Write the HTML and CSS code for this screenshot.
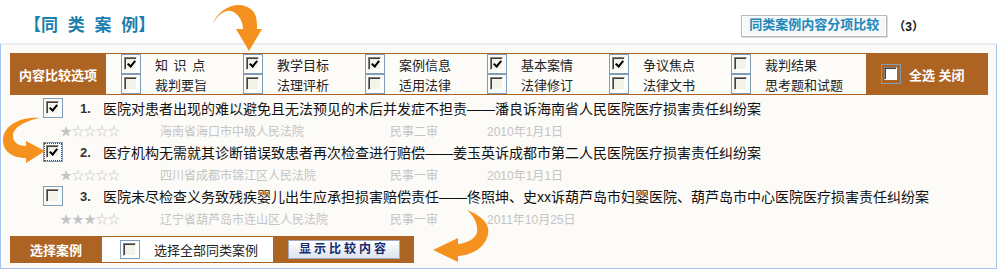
FILE: index.html
```html
<!DOCTYPE html>
<html lang="zh-CN">
<head>
  <meta charset="UTF-8" />
  <title>同类案例</title>
  <link rel="stylesheet" href="styles.css">
</head>
<body>
  <div class="top">
    <h2 class="title">【同 类 案 例】</h2>
    <div class="top-right">
      <span class="btn-top">同类案例内容分项比较</span>
      <span class="count">（3）</span>
    </div>
  </div>

  <div class="panel">
    <div class="opts">
      <div class="opts-label">内容比较选项</div>
      <div class="opts-grid">
        <label class="opt"><span class="cb"><span class="chk on"></span></span><span class="opt-text sp">知 识 点</span></label>
        <label class="opt"><span class="cb"><span class="chk on"></span></span><span class="opt-text">教学目标</span></label>
        <label class="opt"><span class="cb"><span class="chk on"></span></span><span class="opt-text">案例信息</span></label>
        <label class="opt"><span class="cb"><span class="chk on"></span></span><span class="opt-text">基本案情</span></label>
        <label class="opt"><span class="cb"><span class="chk on"></span></span><span class="opt-text">争议焦点</span></label>
        <label class="opt"><span class="cb"><span class="chk"></span></span><span class="opt-text">裁判结果</span></label>
        <label class="opt"><span class="cb"><span class="chk"></span></span><span class="opt-text">裁判要旨</span></label>
        <label class="opt"><span class="cb"><span class="chk"></span></span><span class="opt-text">法理评析</span></label>
        <label class="opt"><span class="cb"><span class="chk"></span></span><span class="opt-text">适用法律</span></label>
        <label class="opt"><span class="cb"><span class="chk"></span></span><span class="opt-text">法律修订</span></label>
        <label class="opt"><span class="cb"><span class="chk"></span></span><span class="opt-text">法律文书</span></label>
        <label class="opt"><span class="cb"><span class="chk"></span></span><span class="opt-text">思考题和试题</span></label>
      </div>
      <div class="opts-all"><span class="cb"><span class="chk white"></span></span><span class="all-text">全选&nbsp;关闭</span></div>
    </div>

    <ul class="cases">
      <li class="case">
        <div class="case-title"><span class="cb"><span class="chk on"></span></span><b class="num">1.</b><span>医院对患者出现的难以避免且无法预见的术后并发症不担责——潘良诉海南省人民医院医疗损害责任纠纷案</span></div>
        <div class="case-meta"><span class="stars">★☆☆☆☆</span><span class="court">海南省海口市中级人民法院</span><span class="trial">民事二审</span><span>2010年1月1日</span></div>
      </li>
      <li class="case">
        <div class="case-title"><span class="cb focus"><span class="chk on"></span></span><b class="num">2.</b><span>医疗机构无需就其诊断错误致患者再次检查进行赔偿——姜玉英诉成都市第二人民医院医疗损害责任纠纷案</span></div>
        <div class="case-meta"><span class="stars">★☆☆☆☆</span><span class="court">四川省成都市锦江区人民法院</span><span class="trial">民事一审</span><span>2010年1月1日</span></div>
      </li>
      <li class="case">
        <div class="case-title"><span class="cb"><span class="chk"></span></span><b class="num">3.</b><span>医院未尽检查义务致残疾婴儿出生应承担损害赔偿责任——佟照坤、史xx诉葫芦岛市妇婴医院、葫芦岛市中心医院医疗损害责任纠纷案</span></div>
        <div class="case-meta"><span class="stars">★★★☆☆</span><span class="court">辽宁省葫芦岛市连山区人民法院</span><span class="trial">民事一审</span><span>2011年10月25日</span></div>
      </li>
    </ul>

    <div class="pick">
      <div class="pick-label">选择案例</div>
      <div class="pick-all"><span class="cb"><span class="chk"></span></span><span class="opt-text">选择全部同类案例</span></div>
      <div class="pick-btn"><span class="btn-show">显示比较内容</span></div>
    </div>
  </div>

  <!-- orange hint arrows -->
  <svg class="arrow arrow-top" width="70" height="55" viewBox="0 0 70 55">
    <path d="M13 24 C18 8, 40 -2, 53 11 C57 16, 57 22, 57 29 L62 29 L49 51 L36 29 L43 29 C43 21, 38 13, 31 11 C24 10, 18 15, 13 24 Z" />
  </svg>
  <svg class="arrow arrow-left" width="50" height="60" viewBox="0 0 50 60">
    <path d="M40 8 C20 6, 3 16, 3 30 C3 42, 13 48, 26 48 L26 53 L45 41 L26 31 L26 36 C18 36, 13 32, 13 26 C13 18, 24 11, 40 8 Z" />
  </svg>
  <svg class="arrow arrow-bottom" width="75" height="65" viewBox="0 0 75 65">
    <path d="M47 10 C62 16, 70 24, 68 34 C66 46, 54 55, 38 56 L38 62 L13 50 L38 38 L38 44 C48 43, 56 38, 57 32 C58 24, 54 16, 47 10 Z" />
  </svg>
</body>
</html>
```

FILE: styles.css
```css
/* base */
* { box-sizing: border-box; margin: 0; padding: 0; }
body {
  font-family: "Liberation Sans", "Noto Sans CJK SC", sans-serif;
  font-size: 13px;
  color: #222;
  background: #fff;
  position: relative;
  width: 998px;
}

/* title row */
.top {
  display: flex;
  align-items: center;
  height: 43px;
  padding-top: 8px;
  padding-left: 24px;
}
.title {
  font-size: 17px;
  font-weight: bold;
  color: #1b7fad;
  word-spacing: 5px;
  line-height: 20px;
}
.top-right { margin-left: auto; display: flex; align-items: center; padding-right: 74px; }
.btn-top {
  display: inline-block;
  height: 22px;
  line-height: 18px;
  padding: 0 7px;
  border: 1px solid #b9b9b9;
  box-shadow: inset 0 0 0 1px #fff, 1px 1px 0 #ddd;
  background: #f5f7f8;
  color: #1d88ba;
  font-weight: bold;
  font-size: 13px;
}
.count { margin-left: 6px; font-weight: bold; font-size: 12px; color: #111; }

/* main panel */
.panel {
  width: 997px;
  background: #fcfbf8;
  border: 1px solid #a7c3ef;
  border-top: 2px solid #e8edf1;
  padding: 8px 0 5px;
}

/* checkbox look */
.cb {
  display: inline-flex;
  flex: none;
  width: 20px;
  height: 20px;
  padding: 2px 0 0 2px;
  border: 1px solid #7f9db9;
}
.cb.focus { outline: 1px dotted #444; outline-offset: -2px; }
.chk {
  display: inline-flex;
  align-items: center;
  justify-content: center;
  width: 13px;
  height: 13px;
  border: 1px solid;
  border-color: #808080 #fff #fff #808080;
  box-shadow: inset 1px 1px 0 #404040;
  background: #f3f3ea;
}
.chk.white { background: #fff; }
.chk.on::after {
  content: "";
  width: 3px;
  height: 6px;
  margin: -2px 0 0 1px;
  border: solid #000;
  border-width: 0 2px 2px 0;
  transform: rotate(40deg);
}

/* compare option bar */
.opts {
  display: flex;
  width: 978px;
  height: 42px;
  margin-left: 9px;
  padding: 1px 0;
  background: #ad6423;
}
.opts-label {
  width: 96px;
  display: flex; align-items: center; justify-content: center;
  color: #fff; font-weight: bold; font-size: 13px;
}
.opts-grid {
  width: 760px;
  background: #fdfcf9;
  padding-left: 15px;
  display: grid;
  grid-template-columns: repeat(6, 122px);
  grid-auto-rows: 20px;
}
.opt { display: flex; align-items: center; }
.opt-text { margin-left: 14px; font-size: 13px; color: #222; }
.sp { word-spacing: 2px; }
.opts-all {
  flex: 1;
  display: flex; align-items: center;
  padding-left: 15px;
  color: #fff; font-weight: bold; font-size: 13px;
}
.all-text { margin-left: 8px; }

/* case list */
.cases { list-style: none; margin-top: 2px; }
.case-title {
  display: flex; align-items: center;
  height: 22px;
  padding-left: 42px;
  font-size: 14px;
  color: #111;
}
.num { width: 23px; margin-left: 17px; font-size: 13px; color: #333; }
.case-meta {
  display: flex; align-items: center;
  height: 22px;
  padding-left: 59px;
  font-size: 12px;
  color: #c4c4c4;
}
.stars { width: 100px; font-family: "Noto Sans CJK SC", sans-serif; }
.court { width: 230px; }
.trial { width: 97px; }

/* select bar */
.pick {
  display: flex;
  width: 404px;
  height: 27px;
  margin: 7px 0 0 9px;
  padding: 1px 0;
  background: #ad6423;
}
.pick-label {
  width: 92px;
  display: flex; align-items: center; justify-content: center;
  color: #fff; font-weight: bold; font-size: 13px;
}
.pick-all {
  width: 171px;
  background: #fff;
  display: flex; align-items: center;
  padding-left: 18px;
}
.pick-all .cb { height: 19px; }
.pick-btn { display: flex; align-items: center; padding-left: 15px; }
.btn-show {
  display: inline-block;
  width: 112px; height: 19px;
  line-height: 17px;
  text-align: center;
  border: 1px solid #a3abbb;
  background: linear-gradient(#ffffff, #dce3ee);
  color: #15296e;
  font-weight: bold; font-size: 12px;
  letter-spacing: 3px;
}

/* hint arrows over the page */
.arrow { position: absolute; fill: #f5921f; }
.arrow-top { left: 200px; top: 0; }
.arrow-left { left: 0; top: 110px; }
.arrow-bottom { left: 420px; top: 200px; }
```
